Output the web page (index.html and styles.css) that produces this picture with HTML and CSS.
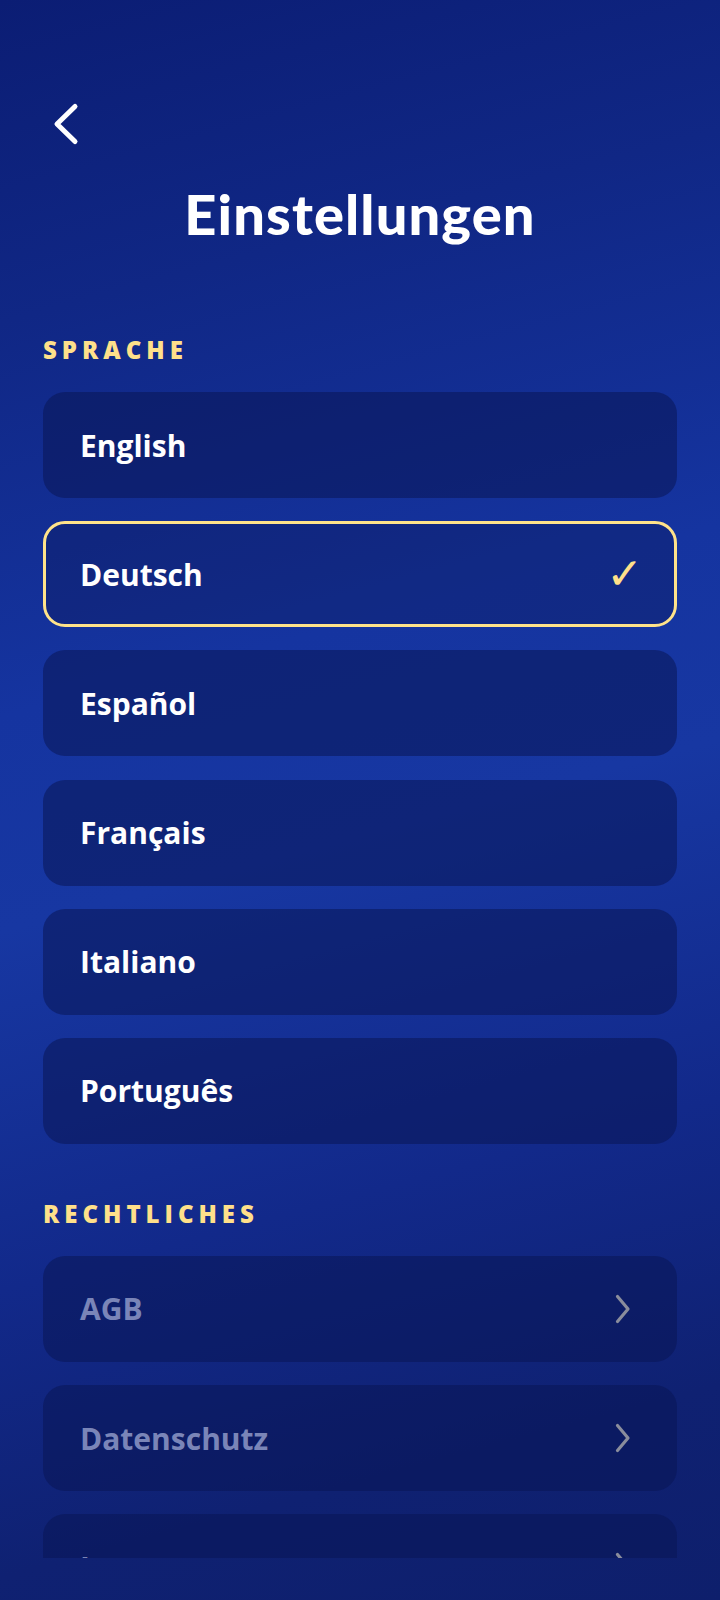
FILE: index.html
```html
<!DOCTYPE html>
<html lang="de">
<head>
    <meta charset="UTF-8">
    <meta name="viewport" content="width=device-width, initial-scale=1.0">
    <title>Einstellungen</title>
    <link rel="stylesheet" href="styles.css">
</head>
<body>
    <div class="screen">
        <div class="content">
            <button class="back-btn" aria-label="Zurück">
                <svg width="26" height="44" viewBox="0 0 26 44">
                    <path d="M22 4.5 L4 22 L22 39.5" fill="none" stroke="#fff" stroke-width="5" stroke-linecap="round" stroke-linejoin="round"/>
                </svg>
            </button>

            <h1 class="title">Einstellungen</h1>

            <h2 class="section-label">Sprache</h2>
            <div class="list">
                <div class="item">English</div>
                <div class="item selected">Deutsch <span class="check">✓</span></div>
                <div class="item">Español</div>
                <div class="item">Français</div>
                <div class="item">Italiano</div>
                <div class="item">Português</div>
            </div>

            <h2 class="section-label legal-label">Rechtliches</h2>
            <div class="list">
                <div class="item link">AGB
                    <svg class="chev" width="18" height="30" viewBox="0 0 18 30"><path d="M3.5 2.5 L14 15 L3.5 27.5" fill="none" stroke="#8a8d9c" stroke-width="3.2" stroke-linecap="round" stroke-linejoin="round"/></svg>
                </div>
                <div class="item link">Datenschutz
                    <svg class="chev" width="18" height="30" viewBox="0 0 18 30"><path d="M3.5 2.5 L14 15 L3.5 27.5" fill="none" stroke="#8a8d9c" stroke-width="3.2" stroke-linecap="round" stroke-linejoin="round"/></svg>
                </div>
                <div class="item link">Impressum
                    <svg class="chev" width="18" height="30" viewBox="0 0 18 30"><path d="M3.5 2.5 L14 15 L3.5 27.5" fill="none" stroke="#8a8d9c" stroke-width="3.2" stroke-linecap="round" stroke-linejoin="round"/></svg>
                </div>
            </div>
        </div>
    </div>
</body>
</html>
```

FILE: styles.css
```css
body {
    margin: 0;
    font-family: 'Open Sans', 'Noto Sans', sans-serif;
    color: #fff;
}
.screen {
    width: 720px;
    height: 1600px;
    background: linear-gradient(165deg, #0b1d74 0%, #102785 18%, #1534a0 40%, #1737a2 52%, #12298a 72%, #0f2172 88%, #0e1f6c 100%);
    overflow: hidden;
}
.content {
    height: 1558px;
    overflow: hidden;
    padding: 0 43px;
    box-sizing: border-box;
}
.back-btn {
    display: block;
    background: none;
    border: none;
    padding: 0;
    margin: 102px 0 0 10px;
    cursor: pointer;
}
.back-btn svg {
    display: block;
}
.title {
    margin: 35px 0 0;
    text-align: center;
    font-family: 'Lato', sans-serif;
    font-size: 56px;
    line-height: 66px;
    font-weight: 900;
    letter-spacing: 1.1px;
}
.section-label {
    margin: 88px 0 0;
    font-size: 24px;
    line-height: 29px;
    font-weight: 800;
    color: #ffe08a;
    text-transform: uppercase;
    letter-spacing: 5px;
}
.legal-label {
    margin-top: 55px;
}
.list {
    display: flex;
    flex-direction: column;
    gap: 23.2px;
    margin-top: 28px;
}
.item {
    height: 106px;
    box-sizing: border-box;
    display: flex;
    align-items: center;
    justify-content: space-between;
    padding: 0 39px 0 37px;
    border-radius: 22px;
    background: rgba(10, 22, 86, 0.55);
    font-size: 30px;
    font-weight: 700;
    flex-shrink: 0;
}
.item.selected {
    border: 3px solid #ffe38a;
    padding: 0 31px 0 34px;
    background: rgba(14, 28, 100, 0.45);
}
.check {
    color: #ffe08a;
    font-family: 'DejaVu Sans', sans-serif;
    font-size: 44px;
    line-height: 1;
    font-weight: 700;
}
.item.link {
    color: #7a85b8;
    padding-right: 45px;
}
.chev {
    display: block;
}
```
